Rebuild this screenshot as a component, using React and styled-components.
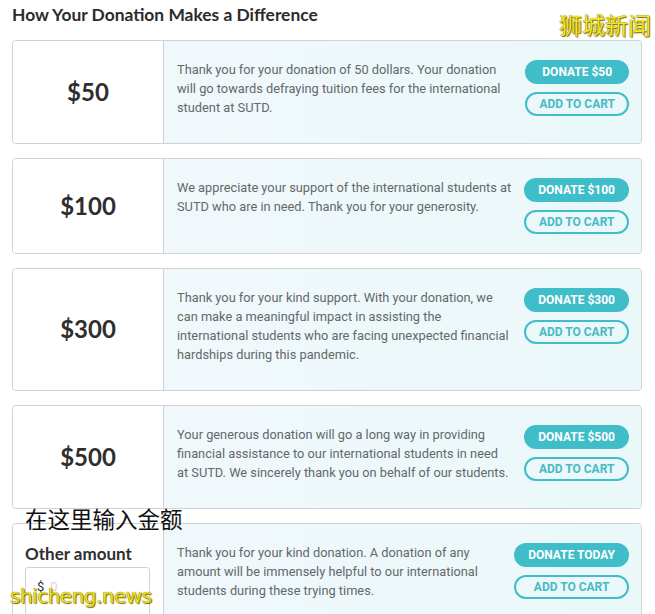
import React from "react";
import styled, { createGlobalStyle } from "styled-components";

const Global = createGlobalStyle`
  html, body { margin: 0; padding: 0; background: #ffffff; }
  body { font-family: "Lato", "Open Sans", sans-serif; }
  * { box-sizing: border-box; }
`;

const Page = styled.div`
  position: relative;
  width: 655px;
  height: 614px;
  overflow: hidden;
  padding: 5px 13px 0 12px;
`;

const Title = styled.h2`
  margin: 0 0 15px;
  font-family: "Lato", sans-serif;
  font-weight: 700;
  font-size: 17.4px;
  line-height: 20px;
  color: #2b2b2b;
`;

const List = styled.div`
  display: flex;
  flex-direction: column;
  gap: 14px;
`;

const Card = styled.div`
  position: relative;
  display: grid;
  grid-template-columns: 151px minmax(0, 1fr);
  border: 1px solid #cfd3d6;
  border-radius: 4px;
`;

const Left = styled.div`
  background: #ffffff;
  border-right: 1px solid #cfd3d6;
  border-radius: 4px 0 0 4px;
  display: flex;
  flex-direction: column;
  align-items: ${(p) => (p.$form ? "flex-start" : "center")};
  justify-content: ${(p) => (p.$form ? "flex-start" : "center")};
  padding: ${(p) => (p.$form ? "20px 0 0 12px" : "0")};
`;

const Amount = styled.div`
  font-family: "Lato", sans-serif;
  font-weight: 700;
  font-size: 24px;
  color: #2e2e2e;
  margin-bottom: 2px;
`;

const Label = styled.div`
  font-family: "Lato", sans-serif;
  font-weight: 700;
  font-size: 17px;
  line-height: 20px;
  color: #2e2e2e;
`;

const InputBox = styled.div`
  margin-top: 3px;
  width: 125px;
  height: 50px;
  border: 1px solid #cfd3d6;
  border-radius: 3px;
  background: #fff;
  display: flex;
  align-items: flex-start;
  padding: 11px 0 0 11px;
  gap: 6px;
  font-family: "Roboto", sans-serif;
  font-size: 13px;
  color: #333;
`;

const Placeholder = styled.span`
  color: #d6d6d6;
`;

const Right = styled.div`
  background: linear-gradient(90deg, #f1f8fb 0%, #eaf8f9 100%);
  border-radius: 0 4px 4px 0;
  display: flex;
  align-items: flex-start;
  gap: 8px;
  padding: 19px 12px 19px 13px;
`;

const Text = styled.p`
  margin: 0 0 7px;
  flex: 1 1 auto;
  max-width: 335px;
  font-family: "Roboto", sans-serif;
  font-size: 12.8px;
  line-height: 19px;
  color: #63686b;
`;

const Buttons = styled.div`
  margin-left: auto;
  flex: none;
  display: flex;
  flex-direction: column;
  gap: 8px;
`;

const Btn = styled.button`
  height: 24px;
  padding: 0 12px;
  border-radius: 13px;
  border: 2px solid #3fbdc8;
  background: ${(p) => (p.$outline ? "transparent" : "#3fbdc8")};
  color: ${(p) => (p.$outline ? "#47bac4" : "#ffffff")};
  font-family: "Roboto", sans-serif;
  font-weight: 700;
  font-size: 12px;
  text-transform: uppercase;
  white-space: nowrap;
  cursor: pointer;
  display: flex;
  align-items: center;
  justify-content: center;
`;

const Annotation = styled.div`
  position: absolute;
  left: 12px;
  top: -20px;
  font-family: "Noto Sans CJK SC", sans-serif;
  font-size: 22.5px;
  line-height: 28px;
  color: #111;
  white-space: nowrap;
  z-index: 2;
`;

const WatermarkTop = styled.div`
  position: absolute;
  right: 4px;
  top: 10px;
  font-family: "Noto Sans CJK SC", sans-serif;
  font-size: 23px;
  line-height: 28px;
  color: #f3e62a;
  text-shadow: 0 0 1px #6b5a00, 1px 1px 1px #7a6a00;
  z-index: 3;
`;

const WatermarkBottom = styled.div`
  position: absolute;
  left: 10px;
  top: 583px;
  font-family: "DejaVu Sans", sans-serif;
  font-size: 20px;
  line-height: 26px;
  color: #eadf24;
  text-shadow: 0 0 1px #6b5a00, 1px 1px 1px #7a6a00;
  letter-spacing: -0.5px;
  z-index: 3;
`;

const items = [
  {
    amount: "$50",
    text: "Thank you for your donation of 50 dollars. Your donation will go towards defraying tuition fees for the international student at SUTD.",
    donate: "Donate $50",
  },
  {
    amount: "$100",
    text: "We appreciate your support of the international students at SUTD who are in need. Thank you for your generosity.",
    donate: "Donate $100",
  },
  {
    amount: "$300",
    text: "Thank you for your kind support. With your donation, we can make a meaningful impact in assisting the international students who are facing unexpected financial hardships during this pandemic.",
    donate: "Donate $300",
  },
  {
    amount: "$500",
    text: "Your generous donation will go a long way in providing financial assistance to our international students in need at SUTD. We sincerely thank you on behalf of our students.",
    donate: "Donate $500",
  },
];

export default function App() {
  return (
    <>
      <Global />
      <Page>
        <Title>How Your Donation Makes a Difference</Title>
        <WatermarkTop>狮城新闻</WatermarkTop>
        <List>
          {items.map((it) => (
            <Card key={it.amount}>
              <Left>
                <Amount>{it.amount}</Amount>
              </Left>
              <Right>
                <Text>{it.text}</Text>
                <Buttons>
                  <Btn>{it.donate}</Btn>
                  <Btn $outline>Add to cart</Btn>
                </Buttons>
              </Right>
            </Card>
          ))}
          <Card>
            <Annotation>在这里输入金额</Annotation>
            <Left $form>
              <Label>Other amount</Label>
              <InputBox>
                <span>$</span>
                <Placeholder>0</Placeholder>
              </InputBox>
            </Left>
            <Right>
              <Text>
                Thank you for your kind donation. A donation of any amount will be immensely helpful to our international students during these trying times.
              </Text>
              <Buttons>
                <Btn>Donate today</Btn>
                <Btn $outline>Add to cart</Btn>
              </Buttons>
            </Right>
          </Card>
        </List>
        <WatermarkBottom>shicheng.news</WatermarkBottom>
      </Page>
    </>
  );
}
